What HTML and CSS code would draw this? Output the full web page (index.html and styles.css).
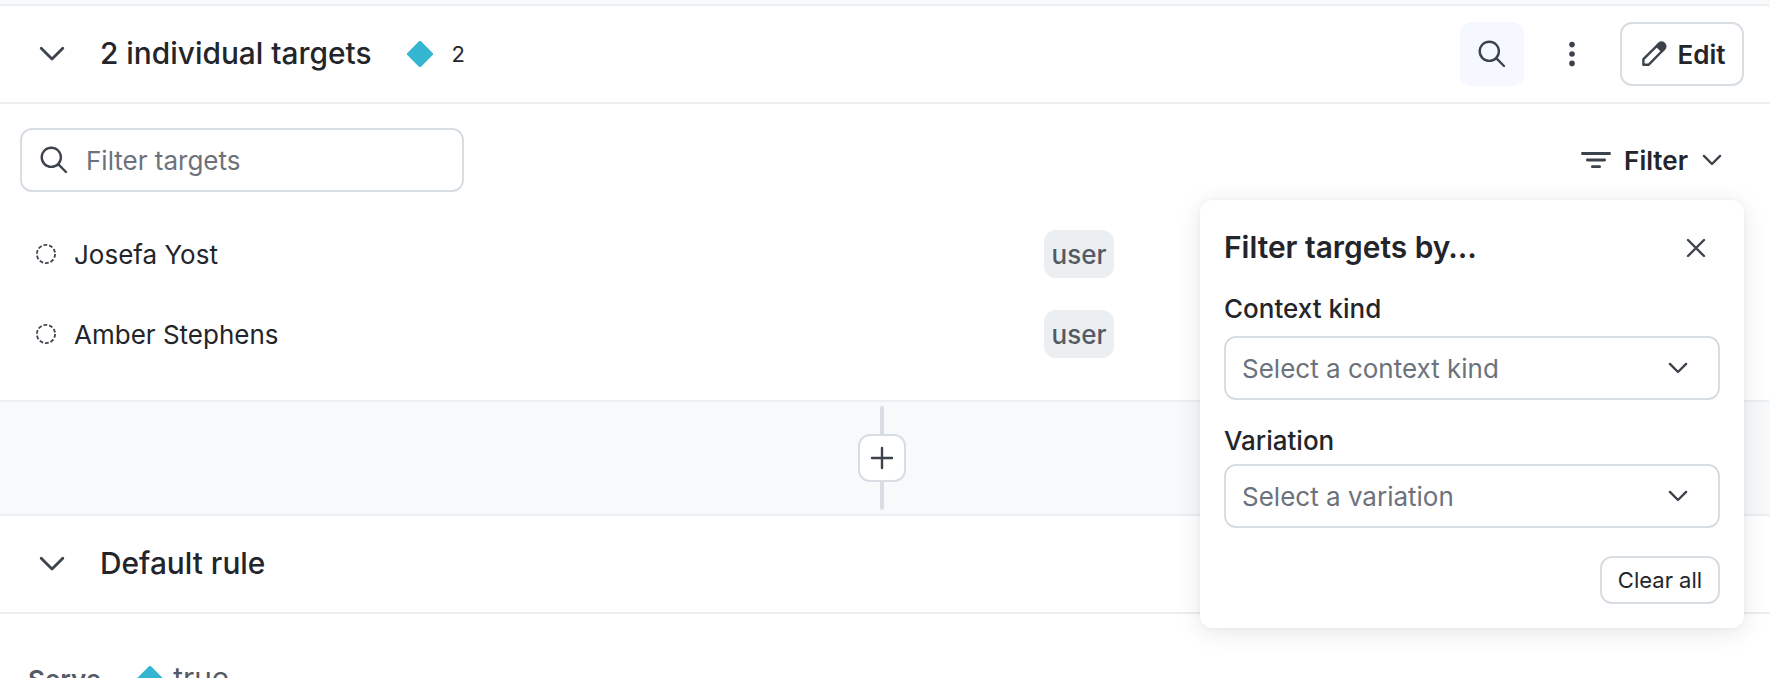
FILE: index.html
```html
<!DOCTYPE html>
<html lang="en">
<head>
  <meta charset="UTF-8" />
  <title>Targeting</title>
  <link rel="stylesheet" href="styles.css">
</head>
<body>

  <section class="card targets">
    <header class="card-header">
      <svg class="icon toggle" width="26" height="16" viewBox="0 0 26 16"><path d="M2.2 2.2 13 13 23.8 2.2"/></svg>
      <h2 class="card-title">2 individual targets</h2>
      <svg class="diamond" width="26" height="26" viewBox="0 0 26 26"><path d="M11.7.6a1.8 1.8 0 0 1 2.6 0l11.1 11.1a1.8 1.8 0 0 1 0 2.6L14.3 25.4a1.8 1.8 0 0 1-2.6 0L.6 14.3a1.8 1.8 0 0 1 0-2.6z"/></svg>
      <span class="count">2</span>
      <div class="actions">
        <button class="icon-button active" aria-label="Search targets">
          <svg class="icon" width="28" height="28" viewBox="0 0 28 28"><circle cx="11.3" cy="11.3" r="9.6"/><path d="M18.2 18.2 26 26"/></svg>
        </button>
        <button class="icon-button" aria-label="More">
          <svg class="dots" width="6" height="26" viewBox="0 0 6 26"><circle cx="3" cy="3.6" r="2.8"/><circle cx="3" cy="13" r="2.8"/><circle cx="3" cy="22.4" r="2.8"/></svg>
        </button>
        <button class="button edit">
          <svg class="icon" width="26" height="26" viewBox="0 0 26 26"><path d="M2.4 23.7v-5.6L17.9 2.8a3.6 3.6 0 0 1 5.2 5.2L7.8 23.7z"/><path class="filled" d="m15.8 5 2.1-2.2a3.6 3.6 0 0 1 5.2 5.2l-2.1 2.1z"/></svg>
          <span>Edit</span>
        </button>
      </div>
    </header>

    <div class="toolbar">
      <div class="search">
        <svg class="icon" width="28" height="28" viewBox="0 0 28 28"><circle cx="11.3" cy="11.3" r="9.6"/><path d="M18.2 18.2 26 26"/></svg>
        <span>Filter targets</span>
      </div>
      <div class="filter">
        <svg class="icon filter-lines" width="30" height="18" viewBox="0 0 30 18"><path d="M1.4 2.5h27.2M6.4 9h17.2M11.4 15.7h7.2"/></svg>
        <span>Filter</span>
        <svg class="icon" width="20" height="12" viewBox="0 0 20 12"><path d="M1.9 1.9 10 10l8.1-8.1"/></svg>

        <div class="popover">
          <div class="popover-header">
            <h3>Filter targets by…</h3>
            <svg class="icon" width="20" height="20" viewBox="0 0 20 20"><path d="m2 2 16 16M18 2 2 18"/></svg>
          </div>
          <div class="field">
            <div class="label">Context kind</div>
            <div class="select">
              <span>Select a context kind</span>
              <svg class="icon" width="20" height="12" viewBox="0 0 20 12"><path d="M1.9 1.9 10 10l8.1-8.1"/></svg>
            </div>
          </div>
          <div class="field compact">
            <div class="label">Variation</div>
            <div class="select">
              <span>Select a variation</span>
              <svg class="icon" width="20" height="12" viewBox="0 0 20 12"><path d="M1.9 1.9 10 10l8.1-8.1"/></svg>
            </div>
          </div>
          <button class="button clear">Clear all</button>
        </div>
      </div>
    </div>

    <div class="row">
      <svg class="status" width="20" height="20" viewBox="0 0 20 20"><circle cx="10" cy="10" r="9.1"/></svg>
      <span class="name">Josefa Yost</span>
      <span class="kind">user</span>
    </div>
    <div class="row">
      <svg class="status" width="20" height="20" viewBox="0 0 20 20"><circle cx="10" cy="10" r="9.1"/></svg>
      <span class="name">Amber Stephens</span>
      <span class="kind">user</span>
    </div>
  </section>

  <div class="connector">
    <span class="line"></span>
    <button class="add" aria-label="Add rule">
      <svg class="icon" width="24" height="24" viewBox="0 0 24 24"><path d="M12 2v20M2 12h20"/></svg>
    </button>
    <span class="line"></span>
  </div>

  <section class="card default-rule">
    <header class="card-header">
      <svg class="icon toggle" width="26" height="16" viewBox="0 0 26 16"><path d="M2.2 2.2 13 13 23.8 2.2"/></svg>
      <h2 class="card-title">Default rule</h2>
    </header>
    <div class="serve">
      <span class="serve-label">Serve</span>
      <svg class="diamond" width="26" height="26" viewBox="0 0 26 26"><path d="M11.7.6a1.8 1.8 0 0 1 2.6 0l11.1 11.1a1.8 1.8 0 0 1 0 2.6L14.3 25.4a1.8 1.8 0 0 1-2.6 0L.6 14.3a1.8 1.8 0 0 1 0-2.6z"/></svg>
      <span class="serve-value">true</span>
    </div>
  </section>

</body>
</html>
```
FILE: styles.css
```css
* {
  box-sizing: border-box;
}

body {
  margin: 0;
  padding-top: 4px;
  height: 678px;
  overflow: hidden;
  background: #f7f9fb;
  color: #23252a;
  font-family: Inter, "Liberation Sans", sans-serif;
  font-size: 26px;
  line-height: 32px;
}

h2, h3 {
  margin: 0;
}

button {
  padding: 0;
  border: none;
  background: none;
  color: inherit;
  font: inherit;
}

svg {
  display: block;
  flex: none;
}

.icon {
  fill: none;
  stroke: #3d434c;
  stroke-width: 2.4;
  stroke-linecap: round;
  stroke-linejoin: round;
}

.icon.toggle,
.icon.filter-lines {
  stroke-width: 2.8;
}

.filled {
  fill: #3d434c;
}

.dots {
  fill: #3d434c;
}

.diamond {
  fill: #34b5d0;
}

.card {
  border: 2px solid #ebeef1;
  border-left: none;
  border-right: none;
  border-radius: 0 4px 4px 0;
  background: #fff;
}

.targets {
  height: 398px;
}

.card-header {
  display: flex;
  align-items: center;
  height: 98px;
  padding: 0 26px 0 39px;
  border-bottom: 2px solid #ebeef1;
}

.toggle {
  margin-right: 35px;
}

.card-title {
  padding-bottom: 2px;
  font-size: 29.85px;
  font-weight: 500;
}

.card-header .diamond {
  margin: 0 19px 0 35px;
}

.count {
  font-size: 22px;
}

.actions {
  display: flex;
  gap: 16px;
  margin-left: auto;
}

.icon-button {
  display: flex;
  align-items: center;
  justify-content: center;
  width: 64px;
  height: 64px;
  border-radius: 12px;
}

.icon-button.active {
  background: #f6f8ff;
}

.button {
  display: flex;
  align-items: center;
  justify-content: center;
  border: 2px solid #d8dde3;
  border-radius: 12px;
  background: #fff;
}

.edit {
  gap: 11px;
  width: 124px;
  height: 64px;
  padding-left: 2px;
  font-weight: 600;
}

.edit span,
.search span,
.filter span {
  padding-top: 2px;
}

.toolbar {
  display: flex;
  align-items: center;
  justify-content: space-between;
  padding: 24px 48px 22px 20px;
}

.search {
  display: flex;
  align-items: center;
  gap: 18px;
  width: 444px;
  height: 64px;
  padding-left: 18px;
  border: 2px solid #d8dde3;
  border-radius: 12px;
  color: #6c727c;
}

.filter {
  position: relative;
  display: flex;
  align-items: center;
  gap: 13px;
  font-weight: 600;
}

.filter-lines + span {
  margin-right: 1px;
}

.popover {
  position: absolute;
  top: 57px;
  right: -22px;
  width: 544px;
  height: 428px;
  padding: 24px;
  border-radius: 12px;
  background: #fff;
  box-shadow: 0 4px 24px rgba(0, 0, 0, 0.1), 0 0 4px rgba(0, 0, 0, 0.04);
  font-weight: 400;
}

.popover-header {
  display: flex;
  align-items: center;
  justify-content: space-between;
  height: 48px;
  padding-right: 14px;
}

.popover-header h3 {
  padding-bottom: 2px;
  font-size: 29.9px;
  font-weight: 600;
}

.field {
  height: 128px;
  padding-top: 21px;
}

.label {
  height: 43px;
  font-weight: 500;
}

.field.compact {
  padding-top: 25px;
}

.compact .label {
  height: 39px;
}

.select {
  display: flex;
  align-items: center;
  justify-content: space-between;
  height: 64px;
  padding: 0 30px 0 16px;
  border: 2px solid #d8dde3;
  border-radius: 12px;
  color: #6c727c;
}

.clear {
  width: 120px;
  height: 48px;
  margin: 28px 0 0 auto;
  font-size: 22px;
}

.row {
  display: flex;
  align-items: center;
  height: 80px;
  padding-left: 36px;
}

.status {
  fill: none;
  stroke: #3d434c;
  stroke-width: 1.8;
  stroke-dasharray: 3.8 1.918;
}

.name {
  width: 970px;
  margin-left: 18px;
  padding-top: 2px;
}

.kind {
  width: 70px;
  height: 48px;
  border-radius: 12px;
  background: #ebeff2;
  color: #545a64;
  font-weight: 500;
  line-height: 50px;
  text-align: center;
}

.connector {
  display: flex;
  flex-direction: column;
  align-items: center;
  height: 112px;
  padding: 4px 6px 4px 0;
}

.line {
  flex: 1;
  width: 4px;
  border-radius: 2px 2px 0 0;
  background: #d8dde3;
}

.add + .line {
  border-radius: 0 0 2px 2px;
}

.add {
  display: flex;
  align-items: center;
  justify-content: center;
  width: 48px;
  height: 48px;
  border: 2px solid #d8dde3;
  border-radius: 12px;
  background: #fff;
}

.default-rule {
  height: 300px;
}

.serve {
  display: flex;
  align-items: center;
  padding: 48px 28px;
  color: #545a64;
}

.serve-label {
  padding-top: 2px;
  font-weight: 600;
}

.serve .diamond {
  margin: 0 10px 0 36px;
}

.serve-value {
  padding-bottom: 2px;
  font-size: 29.8px;
}
```
